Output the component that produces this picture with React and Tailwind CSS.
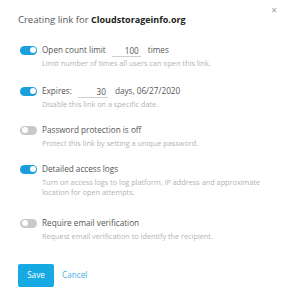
import React, { useState } from "react";

const Toggle = ({ on }) => (
  <div
    className={`relative w-[17px] h-[9px] rounded-full shrink-0 ${
      on ? "bg-[#1a9fdc]" : "bg-[#c9c9c9]"
    }`}
  >
    <div
      className={`absolute top-[1.5px] w-[6px] h-[6px] rounded-full bg-white ${
        on ? "right-[1.5px]" : "left-[1.5px]"
      }`}
    />
  </div>
);

const Option = ({ on, children, desc, className = "" }) => (
  <div className={className}>
    <div className="flex items-center h-[14px]">
      <Toggle on={on} />
      <div className="ml-[5px] flex items-center text-[8.2px] text-[#555] whitespace-nowrap">
        {children}
      </div>
    </div>
    <div className="pl-[22px] mt-[1px] text-[7.3px] leading-[10px] text-[#b3b3b3] whitespace-nowrap">
      {desc}
    </div>
  </div>
);

const NumInput = ({ value, width }) => (
  <div
    className={`${width} h-[13px] border-b border-[#cfcfcf] text-right pr-[2px] text-[8.2px] text-[#555] leading-[13px]`}
  >
    {value}
  </div>
);

const App = () => {
  const [opts] = useState({ count: true, expires: true, password: false, logs: true, email: false });

  return (
    <div
      className="w-[284px] h-[300px] bg-white relative px-[18px]"
      style={{ fontFamily: '"Open Sans", "Liberation Sans", sans-serif' }}
    >
      <div className="absolute right-[7px] top-[3px] text-[10px] text-[#999]">×</div>

      <div className="pt-[13px] h-[27px] text-[9.5px] leading-[14px] text-[#555] whitespace-nowrap">
        Creating link for <span className="font-bold text-[9px] text-[#222]">Cloudstorageinfo.org</span>
      </div>

      <div className="pl-[2px]">
        <Option
          on={opts.count}
          className="mt-[16px]"
          desc="Limit number of times all users can open this link."
        >
          <span>Open count limit</span>
          <div className="ml-[6px]">
            <NumInput value="100" width="w-[29px]" />
          </div>
          <span className="ml-[7px]">times</span>
        </Option>

        <Option
          on={opts.expires}
          className="mt-[16px]"
          desc="Disable this link on a specific date."
        >
          <span>Expires:</span>
          <div className="ml-[6px]">
            <NumInput value="30" width="w-[30px]" />
          </div>
          <span className="ml-[7px]">days, 06/27/2020</span>
        </Option>

        <Option
          on={opts.password}
          className="mt-[14px]"
          desc="Protect this link by setting a unique password."
        >
          Password protection is off
        </Option>

        <Option
          on={opts.logs}
          className="mt-[14px]"
          desc={
            <>
              Turn on access logs to log platform, IP address and approximate
              <br />
              location for open attempts.
            </>
          }
        >
          Detailed access logs
        </Option>

        <Option
          on={opts.email}
          className="mt-[19px]"
          desc="Request email verification to identify the recipient."
        >
          Require email verification
        </Option>
      </div>

      <div className="flex items-center mt-[23px]">
        <button className="w-[36px] h-[23px] rounded-[2px] bg-[#17a9e1] text-white text-[8.2px]">
          Save
        </button>
        <span className="ml-[8px] text-[8.2px] text-[#3fb0e0]">Cancel</span>
      </div>
    </div>
  );
};

export default App;
